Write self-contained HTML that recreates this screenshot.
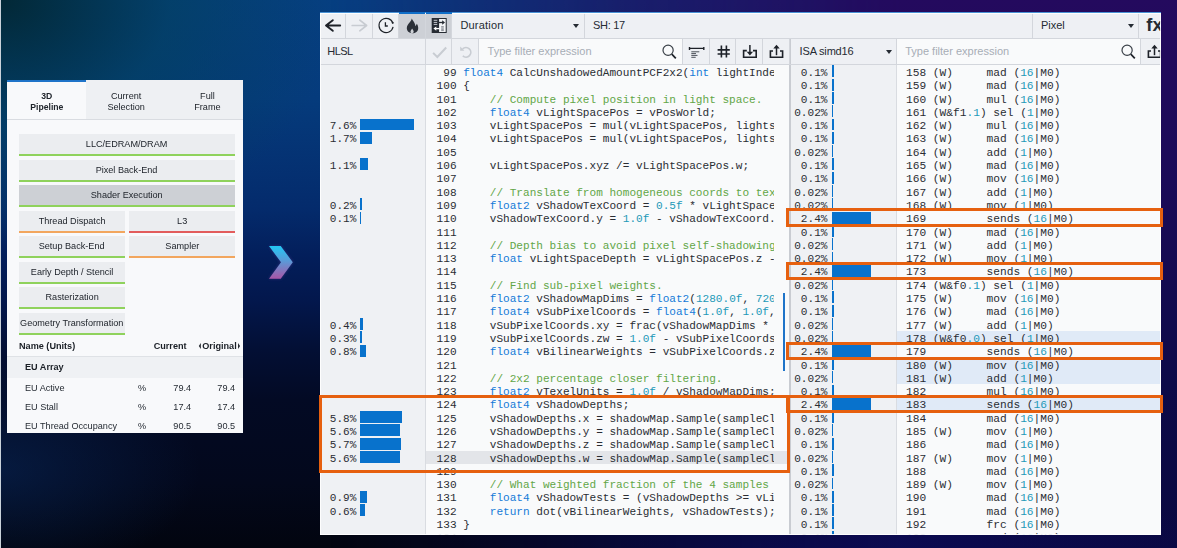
<!DOCTYPE html>
<html><head><meta charset="utf-8"><title>Shader profiler</title>
<style>
*{box-sizing:border-box;margin:0;padding:0}
html,body{width:1177px;height:548px;overflow:hidden}
body{position:relative;font-family:"Liberation Sans",sans-serif;color:#252b33;
background:
 radial-gradient(ellipse 340px 250px at 0 0, rgba(2,40,54,1) 0%, rgba(2,64,92,.62) 50%, rgba(4,60,120,0) 100%),
 radial-gradient(ellipse 200px 110px at 0 470px, rgba(8,40,90,.55) 0%, rgba(8,40,90,0) 100%),
 linear-gradient(180deg,#063f82 0,#053b7c 18%,#042b6c 38%,#031e5a 47%,#03174c 55%,#030f34 64%,#030a24 73%,#03081c 88%,#02050f 100%);}
#bg2{position:absolute;left:0;top:0;width:1177px;height:548px;
 background:radial-gradient(ellipse 500px 60px at 760px 548px, rgba(12,12,90,.9), rgba(12,12,90,0)),linear-gradient(180deg,#240a5e 0,#1b0a58 33%,#0d0a48 70%,#0a0840 100%);
 -webkit-mask-image:linear-gradient(90deg,rgba(0,0,0,0) 330px,rgba(0,0,0,.6) 620px,#000 900px);mask-image:linear-gradient(90deg,rgba(0,0,0,0) 330px,rgba(0,0,0,.6) 620px,#000 900px)}
#edge{position:absolute;left:0;top:0;width:1px;height:548px;background:#c9d2da}
/* left panel */
#lp{position:absolute;left:7px;top:80px;width:236px;height:353px;background:#f8f9fb;overflow:hidden;font-size:9.3px}
#lp .tabs{position:absolute;left:0;top:0;width:236px;height:40px;background:#eef0f3;border-bottom:1px solid #d9dce1}
#lp .tab{position:absolute;top:0;height:39px;text-align:center;line-height:10.4px;padding-top:11.2px;color:#20252c}
#lp .tab .sx{line-height:10.4px}
#lp .tab.on .sx{transform:scaleX(.93)}
#lp .tab.on{background:#f8f9fb;border-top:2px solid #1f74c9;font-weight:bold;padding-top:9.2px;height:39px}
.sx{display:inline-block;transform:scaleX(.98);transform-origin:50% 50%;white-space:nowrap}
.sl{display:inline-block;transform:scaleX(.98);transform-origin:0 50%;white-space:nowrap}
.sr{display:inline-block;transform:scaleX(.98);transform-origin:100% 50%;white-space:nowrap}
.b{position:absolute;height:22px;background:#ebedf0;border-bottom:2px solid #8fd25c;display:flex;justify-content:center;line-height:20.8px;color:#20252c;white-space:nowrap}
.b.o{border-bottom-color:#f2a65e}.b.r{border-bottom-color:#e25c5c}
.b.s{background:#cdd0d5}
.w{left:12px;width:216px}.l{left:12px;width:106px}.rr{left:122px;width:106px}
.th{position:absolute;left:0;top:256px;width:236px;height:21px;border-bottom:1px solid #dfe2e6;font-weight:bold;line-height:20px;color:#1a1f26}
.tl,.trr{display:inline-block;width:0;height:0;border-top:3px solid transparent;border-bottom:3px solid transparent;vertical-align:.5px}
.tl{border-right:2.8px solid #1a1f26;margin-right:1.5px}.trr{border-left:2.8px solid #1a1f26;margin-left:1.5px}
.tr{position:absolute;left:0;width:236px;height:19px;line-height:19px}
.tr.g{background:#eff1f4;font-weight:bold;height:21px;line-height:21px;color:#1a1f26}
.tr>span,.th>span{position:absolute;top:0}
/* right panel */
#rp::after{content:"";position:absolute;left:0;top:0;right:0;bottom:0;border:1px solid rgba(255,255,255,.9);pointer-events:none}
#rptop{position:absolute;left:320px;top:12px;width:841px;height:1px;background:#4a93d6}
#rp{position:absolute;left:320px;top:13px;width:841px;height:522px;background:#f9fafb;overflow:hidden;font-size:11px}
.tb{position:absolute;left:0;width:841px;height:26px;background:#eef0f4;border-bottom:1px solid #d3d6dc}
.tb>div{position:absolute;top:0;height:25px;line-height:25.4px;border-right:1px solid #d3d6dc;white-space:nowrap}
.tb>div.act{background:#cdd0d6}
.abl{position:absolute;top:12px;height:2px;background:#0f6ec8}
.tb svg{position:absolute;left:0;top:0}
.inp{background:#f9fafb}
.ph{color:#a7adb6}
.caret{position:absolute;width:0;height:0;border-left:3.6px solid transparent;border-right:3.6px solid transparent;border-top:4.2px solid #252b33;top:11.2px}
.mono{font-family:"Liberation Mono",monospace;color:#2a2d33}
.mono>div{height:13.3px;padding-top:2.8px;line-height:10.5px;white-space:pre}
#gut{position:absolute;left:0;top:52.2px;width:105px;height:480px;font-size:11.05px}
#gutbg{position:absolute;left:0;top:52px;width:106px;height:470px;background:#eff1f4;border-right:1px solid #d9dce1}
#gut>div,#igut>div{position:relative}
#gut .p{position:absolute;left:9.8px;top:2.8px}
#gut i{position:absolute;left:40.4px;top:.2px;height:11.9px;background:#0872cc}
#code{position:absolute;left:106px;top:52.2px;width:348px;height:480px;overflow:hidden;font-size:11.08px}
#code>div{padding-left:10.6px}
#hl128{position:absolute;left:106px;top:437.9px;width:362px;height:13.3px;background:#e3e5e9}
.k{color:#157ad8}.c{color:#62a647}.n{color:#2399b8}
#sep{position:absolute;left:468.5px;top:52px;width:2px;height:471px;background:#c9ccd2}
#igutbg{position:absolute;left:470.5px;top:52px;width:106px;height:471px;background:#eff1f4;border-right:1px solid #d9dce1}
#igut{position:absolute;left:470.5px;top:52.2px;width:106px;height:480px;font-size:11.1px}
#igut .p{position:absolute;right:69px;top:2.8px}
#igut i{position:absolute;left:41.5px;top:.2px;height:11.9px;background:#0872cc}
#isa{position:absolute;left:577px;top:52.2px;width:264px;height:480px;font-size:11.2px}
#isa>div{padding-left:9px}
#isa .hl{background:#e0eaf7}
#scr{position:absolute;left:463px;top:280px;width:2px;height:78px;background:#1f74c9}
.ob{position:absolute;border:3px solid #e6600f}
</style></head><body>
<div id="bg2"></div>
<div id="edge"></div>

<div id="lp">
 <div class="tabs">
  <div class="tab on" style="left:0;width:79px"><span class="sx">3D<br>Pipeline</span></div>
  <div class="tab" style="left:79px;width:81px"><span class="sx">Current<br>Selection</span></div>
  <div class="tab" style="left:160px;width:80px"><span class="sx">Full<br>Frame</span></div>
 </div>
 <div class="b w" style="top:54px"><span class="sx">LLC/EDRAM/DRAM</span></div>
 <div class="b w" style="top:79.5px"><span class="sx">Pixel Back-End</span></div>
 <div class="b w s" style="top:105px"><span class="sx">Shader Execution</span></div>
 <div class="b l o" style="top:130.5px"><span class="sx">Thread Dispatch</span></div>
 <div class="b rr r" style="top:130.5px"><span class="sx">L3</span></div>
 <div class="b l" style="top:156px"><span class="sx">Setup Back-End</span></div>
 <div class="b rr o" style="top:156px"><span class="sx">Sampler</span></div>
 <div class="b l" style="top:181.5px"><span class="sx">Early Depth / Stencil</span></div>
 <div class="b l" style="top:207px"><span class="sx">Rasterization</span></div>
 <div class="b l" style="top:232.5px"><span class="sx">Geometry Transformation</span></div>
 <div class="th"><span style="left:12px"><span class="sl">Name (Units)</span></span><span style="right:56px"><span class="sr">Current</span></span><span style="right:3px"><span class="sr"><i class="tl"></i>Original<i class="trr"></i></span></span></div>
 <div class="tr g" style="top:277px"><span style="left:18px"><span class="sl">EU Array</span></span></div>
 <div class="tr" style="top:298.5px"><span style="left:18px"><span class="sl">EU Active</span></span><span style="left:131px"><span class="sl">%</span></span><span style="right:52px"><span class="sr">79.4</span></span><span style="right:8px"><span class="sr">79.4</span></span></div>
 <div class="tr" style="top:317.5px"><span style="left:18px"><span class="sl">EU Stall</span></span><span style="left:131px"><span class="sl">%</span></span><span style="right:52px"><span class="sr">17.4</span></span><span style="right:8px"><span class="sr">17.4</span></span></div>
 <div class="tr" style="top:336.5px"><span style="left:18px"><span class="sl">EU Thread Occupancy</span></span><span style="left:131px"><span class="sl">%</span></span><span style="right:52px"><span class="sr">90.5</span></span><span style="right:8px"><span class="sr">90.5</span></span></div>
</div>

<svg id="chev" style="position:absolute;left:259px;top:236px;overflow:visible" width="44" height="53" viewBox="0 0 44 53">
 <defs><linearGradient id="cg" x1="0" y1="0" x2="0" y2="1"><stop offset="0" stop-color="#22c8f4"/><stop offset=".45" stop-color="#5a9ad8"/><stop offset="1" stop-color="#a855a6"/></linearGradient>
 <filter id="gl" x="-50%" y="-50%" width="200%" height="200%"><feGaussianBlur stdDeviation="1.6"/></filter></defs>
 <path d="M10 10 L21.7 10 L33.8 26.3 L21.7 42.8 L10 42.8 L22 26.3 Z" fill="#5a3a9a" opacity=".55" filter="url(#gl)"/>
 <path d="M10 10 L21.7 10 L33.8 26.3 L21.7 42.8 L10 42.8 L22 26.3 Z" fill="url(#cg)"/>
</svg>

<div id="rptop"></div>
<div id="rp">
 <div class="tb" style="top:0">
  <div style="left:0;width:26px"><svg width="26" height="26" viewBox="0 0 26 26"><path d="M20.2 12.5H6.4M12.8 7.2L6 12.5L12.8 17.8" fill="none" stroke="#1d2128" stroke-width="1.9" stroke-linecap="round" stroke-linejoin="round"/></svg></div>
  <div style="left:26px;width:27px"><svg width="27" height="26" viewBox="0 0 27 26"><path d="M6.2 12.5H20.4M13.8 7.2L20.6 12.5L13.8 17.8" fill="none" stroke="#c8ccd2" stroke-width="1.7" stroke-linecap="round" stroke-linejoin="round"/></svg></div>
  <div style="left:53px;width:26px"><svg width="26" height="26" viewBox="0 0 26 26"><path d="M19.9 10.3A7.1 7.1 0 1 0 20.1 13.8" fill="none" stroke="#1d2128" stroke-width="1.15"/><path d="M12.4 9.2V13H14.8" fill="none" stroke="#1d2128" stroke-width="1.3"/><circle cx="19.7" cy="9.8" r="1" fill="#1d2128"/></svg></div>
  <div class="act" style="left:79px;width:27px"><svg width="27" height="26" viewBox="0 0 27 26"><path d="M12.8 5.4C13.6 7.5 15.4 9 16 11.2C16.3 12 16.3 12.8 16.4 13.3C17 12.6 17.6 11.8 17.8 10.8C18.8 12.2 19.3 13.8 19.2 15.4C19.1 18.2 16.6 20.2 13.3 20.2C10 20.2 7.8 18 7.8 15.1C7.8 12.4 9.6 10.8 11 9C12 7.8 12.6 6.6 12.8 5.4Z" fill="#2b3038"/><path d="M13.1 15.4C14 16.7 14.7 17.5 14.7 18.5C14.7 19.5 14 20.3 13.1 20.3C12.2 20.3 11.5 19.5 11.5 18.5C11.5 17.5 12.3 16.7 13.1 15.4Z" fill="#cdd0d5"/></svg></div>
  <div class="act" style="left:106px;width:26px"><svg width="26" height="26" viewBox="0 0 26 26"><rect x="5.7" y="5" width="15" height="15" fill="#262b33"/><rect x="13.1" y="6" width="6.6" height="13" fill="#f4f5f7"/><path d="M7.7 7.3H11.3M7.7 9.4H11.3M7.7 11.4H11.3" stroke="#c5c9cf" stroke-width="1"/><path d="M11.5 9.5H17" stroke="#262b33" stroke-width="1.3"/><path d="M16.2 7.3L19 9.5L16.2 11.7Z" fill="#262b33"/><path d="M13.6 15.6H9.5" stroke="#fff" stroke-width="1.3"/><path d="M10.3 13.4L7.4 15.6L10.3 17.8Z" fill="#fff"/><path d="M15.2 13.7H17.8M15.2 15H17.8M15.2 16.3H17.8M15.2 17.6H17.8" stroke="#6a6f78" stroke-width=".8"/></svg></div>
  <div style="left:132px;width:133px;padding-left:8.4px;letter-spacing:.2px">Duration<span class="caret" style="left:121.4px"></span></div>
  <div style="left:265px;width:448px;padding-left:8px;letter-spacing:-.3px">SH: 17</div>
  <div style="left:713px;width:106px;padding-left:8px;letter-spacing:-.05px">Pixel<span class="caret" style="left:94.5px"></span></div>
  <div style="left:818px;width:30px;border:0;font-size:18.5px;font-weight:bold;padding-left:8.3px;letter-spacing:0;line-height:23px">fx</div>
 </div>
 <div class="tb" style="top:26px">
  <div style="left:0;width:106px;padding-left:7.3px;letter-spacing:-.6px">HLSL</div>
  <div style="left:106px;width:26px"><svg width="26" height="26" viewBox="0 0 26 26"><path d="M7.1 13.9L11.3 18L20.2 8.5" fill="none" stroke="#c8ccd2" stroke-width="2"/></svg></div>
  <div style="left:132px;width:27px"><svg width="27" height="26" viewBox="0 0 27 26"><path d="M10.6 9.9A4.8 4.8 0 1 1 10.8 16.9" fill="none" stroke="#c8ccd2" stroke-width="1.7"/><path d="M8.2 7.6V11.8H12.4Z" fill="#c8ccd2"/></svg></div>
  <div class="inp" style="left:159px;width:204px;padding-left:8.6px"><span class="ph">Type filter expression</span><svg width="26" height="26" viewBox="0 0 26 26" style="left:176px"><circle cx="13.1" cy="11.2" r="5.1" fill="none" stroke="#3a4048" stroke-width="1.2"/><path d="M16.8 15.2L20.8 19.4" stroke="#1d2128" stroke-width="1.7"/></svg></div>
  <div style="left:363px;width:27px"><svg width="27" height="26" viewBox="0 0 27 26"><path d="M6.2 9.4H21.1M6.5 7.9V10.9M20.8 7.9V10.9" fill="none" stroke="#1d2128" stroke-width="1.4"/><path d="M8.3 12.8H16.3M8.3 14.6H13M8.3 16.4H14.5M8.3 18.3H12.7" fill="none" stroke="#3a4048" stroke-width=".9"/></svg></div>
  <div style="left:390px;width:26px"><svg width="26" height="26" viewBox="0 0 26 26"><path d="M11.4 6.6V18.5M16.4 6.6V18.5M7.6 10.85H19.8M7.6 15.05H19.8" fill="none" stroke="#1d2128" stroke-width="1.6"/></svg></div>
  <div style="left:416px;width:27px"><svg width="27" height="26" viewBox="0 0 27 26"><path d="M10.8 11.6H7.6V18.2H20.2V11.6H17" fill="none" stroke="#1d2128" stroke-width="1.6"/><path d="M13.9 5.9V15" fill="none" stroke="#1d2128" stroke-width="1.5"/><path d="M10.7 12.8L13.9 16.6L17.1 12.8Z" fill="#1d2128"/></svg></div>
  <div style="left:443px;width:27px"><svg width="27" height="26" viewBox="0 0 27 26"><path d="M10 12H7.4V18.2H19.6V12H17" fill="none" stroke="#1d2128" stroke-width="1.6"/><path d="M13.5 7.5V16.2" fill="none" stroke="#1d2128" stroke-width="1.5"/><path d="M10.3 9.6L13.5 5.8L16.7 9.6Z" fill="#1d2128"/></svg></div>
  <div style="left:470px;width:107px;padding-left:8.6px;letter-spacing:-.18px;border-left:1px solid #c9ccd2">ISA simd16<span class="caret" style="left:95px"></span></div>
  <div class="inp" style="left:577px;width:244px;padding-left:8.2px"><span class="ph">Type filter expression</span><svg width="26" height="26" viewBox="0 0 26 26" style="left:216.5px"><circle cx="13.1" cy="11.2" r="5.1" fill="none" stroke="#3a4048" stroke-width="1.2"/><path d="M16.8 15.2L20.8 19.4" stroke="#1d2128" stroke-width="1.7"/></svg></div>
  <div style="left:821px;width:30px;border:0"><svg width="27" height="26" viewBox="0 0 27 26"><path d="M10 12H7.4V18.2H19.6V12H17" fill="none" stroke="#1d2128" stroke-width="1.6"/><path d="M13.5 7.5V16.2" fill="none" stroke="#1d2128" stroke-width="1.5"/><path d="M10.3 9.6L13.5 5.8L16.7 9.6Z" fill="#1d2128"/></svg></div>
 </div>
 <div id="gutbg"></div>
 <div id="gut" class="mono">
<div></div>
<div></div>
<div></div>
<div></div>
<div><span class="p">7.6%</span><i style="width:54.0px"></i></div>
<div><span class="p">1.7%</span><i style="width:12.1px"></i></div>
<div></div>
<div><span class="p">1.1%</span><i style="width:7.8px"></i></div>
<div></div>
<div></div>
<div><span class="p">0.2%</span><i style="width:1.4px"></i></div>
<div><span class="p">0.1%</span><i style="width:0.7px"></i></div>
<div></div>
<div></div>
<div></div>
<div></div>
<div></div>
<div></div>
<div></div>
<div><span class="p">0.4%</span><i style="width:2.8px"></i></div>
<div><span class="p">0.3%</span><i style="width:2.1px"></i></div>
<div><span class="p">0.8%</span><i style="width:5.7px"></i></div>
<div></div>
<div></div>
<div></div>
<div></div>
<div><span class="p">5.8%</span><i style="width:41.2px"></i></div>
<div><span class="p">5.6%</span><i style="width:39.8px"></i></div>
<div><span class="p">5.7%</span><i style="width:40.5px"></i></div>
<div><span class="p">5.6%</span><i style="width:39.8px"></i></div>
<div></div>
<div></div>
<div><span class="p">0.9%</span><i style="width:6.4px"></i></div>
<div><span class="p">0.6%</span><i style="width:4.3px"></i></div>
<div></div>
<div></div>
 </div>
 <div id="hl128"></div>
 <div id="code" class="mono">
<div> 99 <span class="k">float4</span> CalcUnshadowedAmountPCF2x2(<span class="k">int</span> lightIndex</div>
<div>100 {</div>
<div>101     <span class="c">// Compute pixel position in light space.</span></div>
<div>102     <span class="k">float4</span> vLightSpacePos = vPosWorld;</div>
<div>103     vLightSpacePos = mul(vLightSpacePos, lights[</div>
<div>104     vLightSpacePos = mul(vLightSpacePos, lights[</div>
<div>105 </div>
<div>106     vLightSpacePos.xyz /= vLightSpacePos.w;</div>
<div>107 </div>
<div>108     <span class="c">// Translate from homogeneous coords to texture</span></div>
<div>109     <span class="k">float2</span> vShadowTexCoord = <span class="n">0.5f</span> * vLightSpacePos</div>
<div>110     vShadowTexCoord.y = <span class="n">1.0f</span> - vShadowTexCoord.y;</div>
<div>111 </div>
<div>112     <span class="c">// Depth bias to avoid pixel self-shadowing</span></div>
<div>113     <span class="k">float</span> vLightSpaceDepth = vLightSpacePos.z - S</div>
<div>114 </div>
<div>115     <span class="c">// Find sub-pixel weights.</span></div>
<div>116     <span class="k">float2</span> vShadowMapDims = <span class="k">float2</span>(<span class="n">1280.0f</span>, <span class="n">720.0f</span></div>
<div>117     <span class="k">float4</span> vSubPixelCoords = <span class="k">float4</span>(<span class="n">1.0f</span>, <span class="n">1.0f</span>, <span class="n">1.0f</span></div>
<div>118     vSubPixelCoords.xy = frac(vShadowMapDims * v</div>
<div>119     vSubPixelCoords.zw = <span class="n">1.0f</span> - vSubPixelCoords.xy</div>
<div>120     <span class="k">float4</span> vBilinearWeights = vSubPixelCoords.zx</div>
<div>121 </div>
<div>122     <span class="c">// 2x2 percentage closer filtering.</span></div>
<div>123     <span class="k">float2</span> vTexelUnits = <span class="n">1.0f</span> / vShadowMapDims;</div>
<div>124     <span class="k">float4</span> vShadowDepths;</div>
<div>125     vShadowDepths.x = shadowMap.Sample(sampleCla</div>
<div>126     vShadowDepths.y = shadowMap.Sample(sampleCla</div>
<div>127     vShadowDepths.z = shadowMap.Sample(sampleCla</div>
<div class="sel">128     vShadowDepths.w = shadowMap.Sample(sampleCla</div>
<div>129 </div>
<div>130     <span class="c">// What weighted fraction of the 4 samples</span></div>
<div>131     <span class="k">float4</span> vShadowTests = (vShadowDepths &gt;= vLig</div>
<div>132     <span class="k">return</span> dot(vBilinearWeights, vShadowTests);</div>
<div>133 }</div>
<div>134 </div>
 </div>
 <div id="scr"></div>
 <div id="sep"></div>
 <div id="igutbg"></div>
 <div id="igut" class="mono">
<div><span class="p">0.1%</span><i style="width:1.6px"></i></div>
<div><span class="p">0.1%</span><i style="width:1.6px"></i></div>
<div><span class="p">0.1%</span><i style="width:1.6px"></i></div>
<div><span class="p">0.02%</span><i style="width:1.3px"></i></div>
<div><span class="p">0.1%</span><i style="width:1.6px"></i></div>
<div><span class="p">0.1%</span><i style="width:1.6px"></i></div>
<div><span class="p">0.02%</span><i style="width:1.3px"></i></div>
<div><span class="p">0.1%</span><i style="width:1.6px"></i></div>
<div><span class="p">0.1%</span><i style="width:1.6px"></i></div>
<div><span class="p">0.02%</span><i style="width:1.3px"></i></div>
<div><span class="p">0.02%</span><i style="width:1.3px"></i></div>
<div><span class="p">2.4%</span><i style="width:39.0px"></i></div>
<div><span class="p">0.1%</span><i style="width:1.6px"></i></div>
<div><span class="p">0.02%</span><i style="width:1.3px"></i></div>
<div><span class="p">0.02%</span><i style="width:1.3px"></i></div>
<div><span class="p">2.4%</span><i style="width:39.0px"></i></div>
<div><span class="p">0.02%</span><i style="width:1.3px"></i></div>
<div><span class="p">0.1%</span><i style="width:1.6px"></i></div>
<div><span class="p">0.1%</span><i style="width:1.6px"></i></div>
<div><span class="p">0.02%</span><i style="width:1.3px"></i></div>
<div><span class="p">0.02%</span><i style="width:1.3px"></i></div>
<div><span class="p">2.4%</span><i style="width:39.0px"></i></div>
<div><span class="p">0.1%</span><i style="width:1.6px"></i></div>
<div><span class="p">0.02%</span><i style="width:1.3px"></i></div>
<div><span class="p">0.1%</span><i style="width:1.6px"></i></div>
<div><span class="p">2.4%</span><i style="width:39.0px"></i></div>
<div><span class="p">0.1%</span><i style="width:1.6px"></i></div>
<div><span class="p">0.02%</span><i style="width:1.3px"></i></div>
<div><span class="p">0.1%</span><i style="width:1.6px"></i></div>
<div><span class="p">0.02%</span><i style="width:1.3px"></i></div>
<div><span class="p">0.1%</span><i style="width:1.6px"></i></div>
<div><span class="p">0.02%</span><i style="width:1.3px"></i></div>
<div><span class="p">0.1%</span><i style="width:1.6px"></i></div>
<div><span class="p">0.1%</span><i style="width:1.6px"></i></div>
<div><span class="p">0.1%</span><i style="width:1.6px"></i></div>
<div><span class="p">0.1%</span><i style="width:1.6px"></i></div>
 </div>
 <div id="isa" class="mono">
<div>158 (W)     mad (<span class="n">16</span>|M0)</div>
<div>159 (W)     mad (<span class="n">16</span>|M0)</div>
<div>160 (W)     mul (<span class="n">16</span>|M0)</div>
<div>161 (W&amp;f1<span class="n">.1</span>) sel (<span class="n">1</span>|M0)</div>
<div>162 (W)     mul (<span class="n">16</span>|M0)</div>
<div>163 (W)     mad (<span class="n">16</span>|M0)</div>
<div>164 (W)     add (<span class="n">1</span>|M0)</div>
<div>165 (W)     mad (<span class="n">16</span>|M0)</div>
<div>166 (W)     mov (<span class="n">16</span>|M0)</div>
<div>167 (W)     add (<span class="n">1</span>|M0)</div>
<div>168 (W)     mov (<span class="n">1</span>|M0)</div>
<div>169         sends (<span class="n">16</span>|M0)</div>
<div>170 (W)     mad (<span class="n">16</span>|M0)</div>
<div>171 (W)     add (<span class="n">1</span>|M0)</div>
<div>172 (W)     mov (<span class="n">1</span>|M0)</div>
<div>173         sends (<span class="n">16</span>|M0)</div>
<div>174 (W&amp;f0<span class="n">.1</span>) sel (<span class="n">1</span>|M0)</div>
<div>175 (W)     mov (<span class="n">16</span>|M0)</div>
<div>176 (W)     mad (<span class="n">16</span>|M0)</div>
<div>177 (W)     add (<span class="n">1</span>|M0)</div>
<div class="hl">178 (W&amp;f0<span class="n">.0</span>) sel (<span class="n">1</span>|M0)</div>
<div>179         sends (<span class="n">16</span>|M0)</div>
<div class="hl">180 (W)     mov (<span class="n">16</span>|M0)</div>
<div class="hl">181 (W)     add (<span class="n">1</span>|M0)</div>
<div>182         mul (<span class="n">16</span>|M0)</div>
<div class="hl">183         sends (<span class="n">16</span>|M0)</div>
<div>184         mad (<span class="n">16</span>|M0)</div>
<div>185 (W)     mov (<span class="n">1</span>|M0)</div>
<div>186         mad (<span class="n">16</span>|M0)</div>
<div>187 (W)     mov (<span class="n">1</span>|M0)</div>
<div>188         mad (<span class="n">16</span>|M0)</div>
<div>189 (W)     mov (<span class="n">1</span>|M0)</div>
<div>190         mad (<span class="n">16</span>|M0)</div>
<div>191         mad (<span class="n">16</span>|M0)</div>
<div>192         frc (<span class="n">16</span>|M0)</div>
<div>193         mad (<span class="n">16</span>|M0)</div>
 </div>
</div>

<div class="abl" style="left:399px;width:26px"></div><div class="abl" style="left:426px;width:26px"></div>
<div class="ob" style="left:319px;top:395px;width:470.5px;height:78px"></div>
<div class="ob" style="left:786px;top:208px;width:377px;height:19px"></div>
<div class="ob" style="left:786px;top:261.5px;width:377px;height:18.5px"></div>
<div class="ob" style="left:786px;top:341.5px;width:377px;height:18.5px"></div>
<div class="ob" style="left:786px;top:395px;width:377px;height:18px"></div>
</body></html>
